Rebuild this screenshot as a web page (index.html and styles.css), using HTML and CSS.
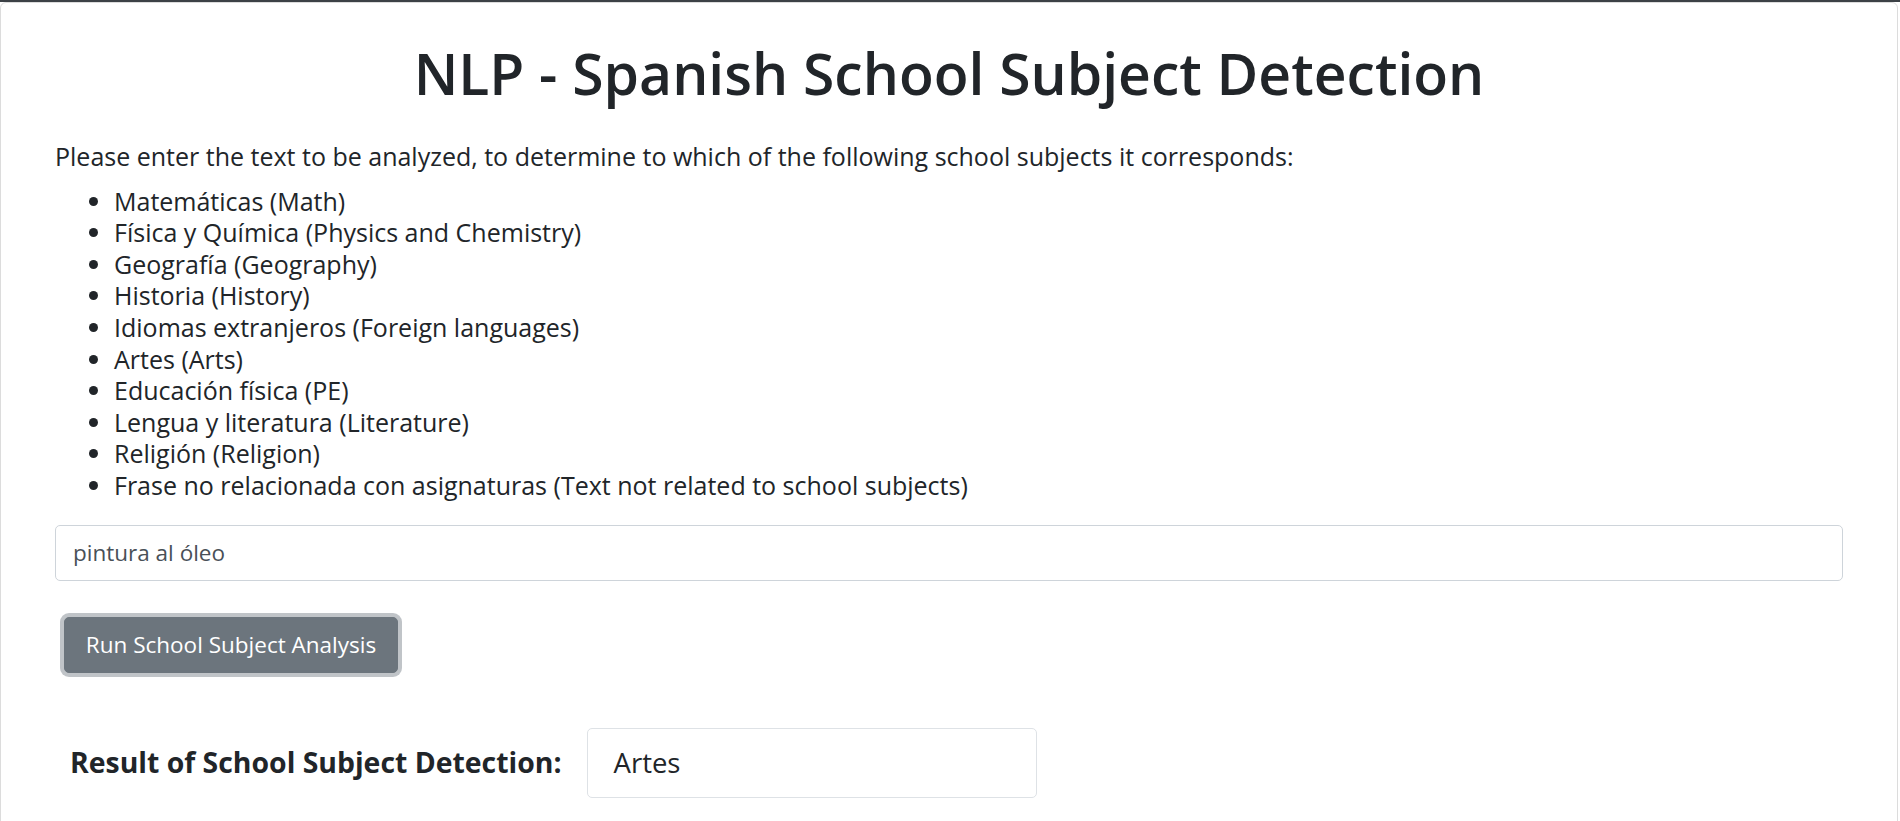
FILE: index.html
```html
<!DOCTYPE html>
<html lang="en">
<head>
<meta charset="utf-8">
<title>NLP - Spanish School Subject Detection</title>
<link rel="stylesheet" href="styles.css">
</head>
<body>
<div class="topbar"></div>
<main class="card">
  <h1 class="title">NLP - Spanish School Subject Detection</h1>
  <p class="intro">Please enter the text to be analyzed, to determine to which of the following school subjects it corresponds:</p>
  <ul class="subjects">
    <li>Matemáticas (Math)</li>
    <li>Física y Química (Physics and Chemistry)</li>
    <li>Geografía (Geography)</li>
    <li>Historia (History)</li>
    <li>Idiomas extranjeros (Foreign languages)</li>
    <li>Artes (Arts)</li>
    <li>Educación física (PE)</li>
    <li>Lengua y literatura (Literature)</li>
    <li>Religión (Religion)</li>
    <li>Frase no relacionada con asignaturas (Text not related to school subjects)</li>
  </ul>
  <input class="text-input" type="text" value="pintura al óleo">
  <div class="actions">
    <button class="btn" type="button">Run School Subject Analysis</button>
  </div>
  <div class="result">
    <span class="result-label">Result of School Subject Detection:</span>
    <div class="result-box">Artes</div>
  </div>
</main>
</body>
</html>
```
FILE: styles.css
```css
html, body {
  margin: 0;
  padding: 0;
  overflow: hidden;
  background: #ffffff;
}

body {
  font-family: "Open Sans", "Noto Sans", sans-serif;
  color: #212529;
  font-size: 25px;
  line-height: 31.6px;
}

.topbar {
  height: 2px;
  background: #3c4146;
}

.card {
  box-sizing: border-box;
  margin-right: 2px;
  min-height: 860px;
  border: 1px solid #dcdcdc;
  border-radius: 6px;
  padding: 36px 54px 40px 54px;
}

.title {
  margin: 0;
  text-align: center;
  font-size: 57px;
  font-weight: 600;
  line-height: 68px;
}

.intro {
  margin: 34px 0 0 0;
}

.subjects {
  margin: 13px 0 0 0;
  padding-left: 59px;
}

.text-input {
  display: block;
  box-sizing: border-box;
  width: 100%;
  height: 56px;
  margin-top: 23px;
  padding: 0 17px;
  border: 1px solid #ced4da;
  border-radius: 5px;
  font-family: inherit;
  font-size: 22.5px;
  color: #495057;
  background: #fff;
}

.actions {
  margin-top: 36px;
  padding-left: 9px;
}

.btn {
  box-sizing: border-box;
  height: 56px;
  width: 334px;
  padding: 0 10px;
  border: 1px solid #6c757d;
  border-radius: 5px;
  background: #6c757d;
  color: #fff;
  font-family: inherit;
  font-size: 22.5px;
  box-shadow: 0 0 0 4px rgba(130, 138, 145, 0.5);
}

.result {
  display: flex;
  align-items: center;
  gap: 25px;
  margin-top: 55px;
  padding-left: 15px;
}

.result-label {
  font-weight: 700;
  font-size: 28.4px;
}

.result-box {
  box-sizing: border-box;
  width: 450px;
  height: 70px;
  padding: 0 26px;
  display: flex;
  align-items: center;
  border: 1px solid #dee2e6;
  border-radius: 5px;
  font-size: 27.5px;
}
```
